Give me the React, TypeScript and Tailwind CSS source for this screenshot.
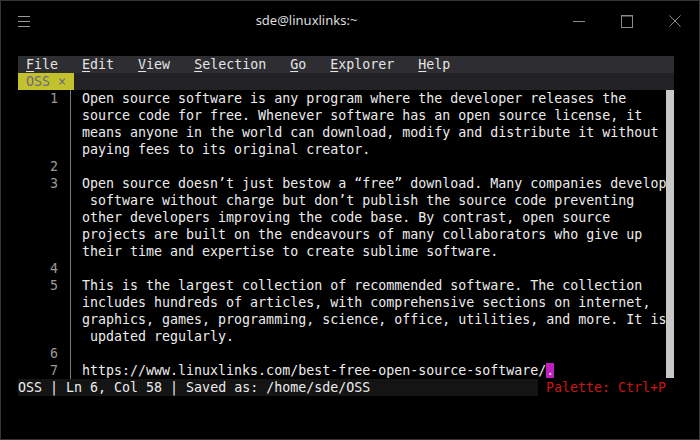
const lines: { n?: number; text: string }[] = [
  { n: 1, text: "Open source software is any program where the developer releases the" },
  { text: "source code for free. Whenever software has an open source license, it" },
  { text: "means anyone in the world can download, modify and distribute it without" },
  { text: "paying fees to its original creator." },
  { n: 2, text: "" },
  { n: 3, text: "Open source doesn\u2019t just bestow a \u201cfree\u201d download. Many companies develop" },
  { text: " software without charge but don\u2019t publish the source code preventing" },
  { text: "other developers improving the code base. By contrast, open source" },
  { text: "projects are built on the endeavours of many collaborators who give up" },
  { text: "their time and expertise to create sublime software." },
  { n: 4, text: "" },
  { n: 5, text: "This is the largest collection of recommended software. The collection" },
  { text: "includes hundreds of articles, with comprehensive sections on internet," },
  { text: "graphics, games, programming, science, office, utilities, and more. It is" },
  { text: " updated regularly." },
  { n: 6, text: "" },
];

const menu = ["File", "Edit", "View", "Selection", "Go", "Explorer", "Help"];

function Gutter({ n }: { n?: number }) {
  return (
    <div className="w-[53px] shrink-0 border-r border-[#7a7a7a] pr-[12px] text-right text-[#9a9a9a]">
      {n ?? ""}
    </div>
  );
}

export default function App() {
  return (
    <div className="w-[700px] h-[440px] bg-black border border-[#363636] flex flex-col overflow-hidden">
      {/* title bar */}
      <div className="h-[40px] flex items-center px-[17px] font-['Noto_Sans',sans-serif]">
        <svg width="12" height="12" viewBox="0 0 12 12" className="mt-[1px]">
          <path d="M0 0.5H12M0 5.5H12M0 10.5H12" stroke="#9a9a9a" strokeWidth="1" />
        </svg>
        <div className="flex-1 text-center text-[13px] text-[#dedede] pl-[10px]">sde@linuxlinks:~</div>
        <div className="flex items-center gap-[36px] pr-[1px]">
          <svg width="12" height="12" viewBox="0 0 12 12">
            <path d="M0 6.5H12" stroke="#8a8a8a" strokeWidth="1" />
          </svg>
          <svg width="12" height="13" viewBox="0 0 12 13">
            <rect x="0.5" y="0.5" width="11" height="12" fill="none" stroke="#8a8a8a" strokeWidth="1" />
            <path d="M0 1H12" stroke="#8a8a8a" strokeWidth="1" />
          </svg>
          <svg width="12" height="12" viewBox="0 0 12 12">
            <path d="M0.5 0.5L11.5 11.5M11.5 0.5L0.5 11.5" stroke="#8a8a8a" strokeWidth="1" />
          </svg>
        </div>
      </div>

      {/* terminal */}
      <div className="mt-[15px] ml-[17px] w-[656px] font-['DejaVu_Sans_Mono',monospace] text-[13.3px] leading-[17px] text-[#ececec] whitespace-pre">
        <div className="h-[17px] bg-[#2e2e32] flex pl-[8px] gap-[24px] text-[#e4e4e4]">
          {menu.map((m) => (
            <span key={m}>
              <span className="underline underline-offset-2">{m[0]}</span>
              {m.slice(1)}
            </span>
          ))}
        </div>
        <div className="h-[17px] bg-[#222226] flex">
          <span className="w-[56px] bg-[#c4c22c] text-[#6a6a80]"> OSS × </span>
        </div>
        <div className="flex">
          <div className="w-[648px]">
            {lines.map((l, i) => (
              <div key={i} className="h-[17px] flex">
                <Gutter n={l.n} />
                <span className="pl-[11px]">{l.text}</span>
              </div>
            ))}
            <div className="h-[17px] flex">
              <Gutter n={7} />
              <span className="pl-[11px]">
                https://www.linuxlinks.com/best-free-open-source-software/
                <span className="bg-[#c01ec0]">.</span>
              </span>
            </div>
          </div>
          <div className="w-[8px] bg-[#c8c8c8] mb-[1px]" />
        </div>
        <div className="h-[17px] flex">
          <span className="w-[520px] bg-[#141414]">OSS | Ln 6, Col 58 | Saved as: /home/sde/OSS</span>
          <span className="pl-[8px] text-[#cc1414]">Palette: Ctrl+P</span>
        </div>
      </div>
    </div>
  );
}
